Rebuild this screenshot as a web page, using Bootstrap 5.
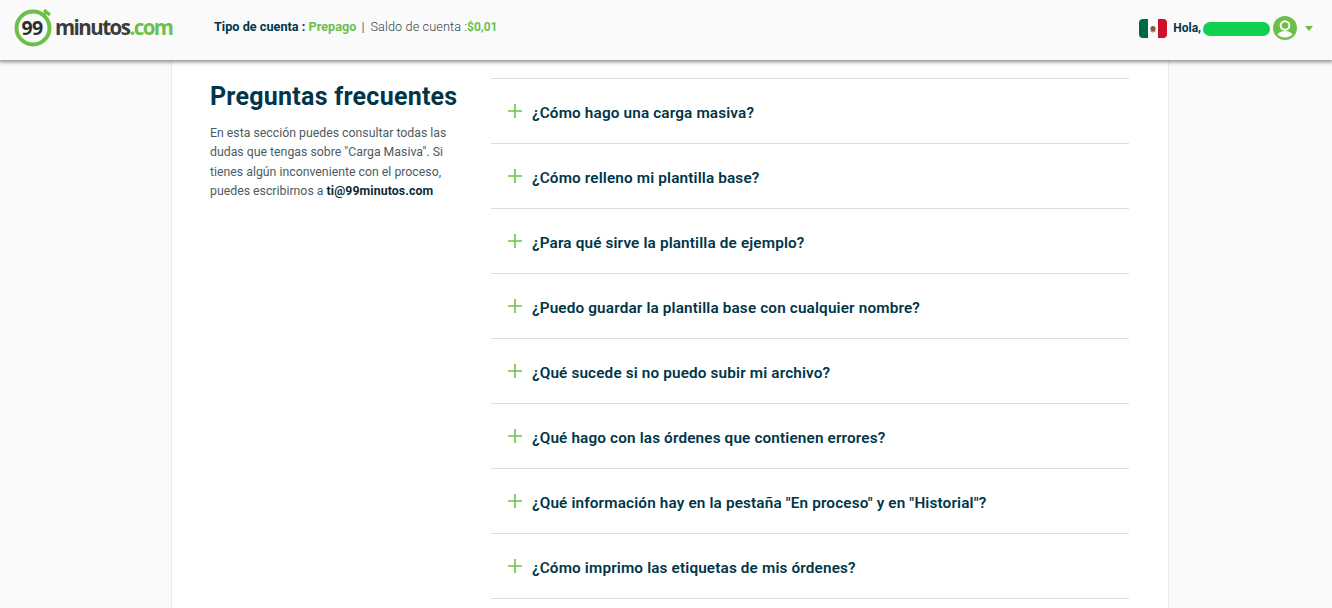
<!DOCTYPE html>
<html lang="es">
<head>
<meta charset="utf-8">
<title>Preguntas frecuentes</title>
<link href="https://cdn.jsdelivr.net/npm/bootstrap@5.3.0/dist/css/bootstrap.min.css" rel="stylesheet">
<style>
html,body{height:100%;overflow:hidden}
body{background:#fafafa;font-family:Roboto,"Liberation Sans",sans-serif;color:#00364a}
.topbar{height:60px;background:#fafafa;box-shadow:0 1px 4px 1px rgba(0,0,0,.45);padding:0 19px 4px 14px;position:relative;z-index:2}
.logo-box{width:162px;height:36px;flex:none}
.logo-svg{display:block;margin-top:-1px}
.logo-word{font-family:"Open Sans",sans-serif;font-weight:700;font-size:20.5px;fill:#3b3b3b}
.logo-com{fill:#6cc04a}
.logo-nines{font-family:"Open Sans",sans-serif;font-weight:700;font-size:19.5px;letter-spacing:-.6px;fill:#2d2d2d}
.acct{margin-left:38px;font-size:12.7px;color:#4c5b62;margin-top:-2px}
.acct b{font-weight:700}
.tone-dark{color:#00364a}
.tone-green{color:#6cc04a}
.acct .tone-narrow{font-size:12px}
.sep{margin:0 6px 0 5px;color:#666}
.saldo{font-weight:300;letter-spacing:.1px;color:#36464d}
.greet{font-size:12px;font-weight:700;color:#00364a;margin-left:6px;margin-top:-1px}
.mask-name{display:block;width:67px;height:14px;border-radius:7px;background:#12d04f;margin-left:2px;margin-top:1px}
.avatar-svg{margin-left:3px}
.drop-tri{width:0;height:0;border-left:4.5px solid transparent;border-right:4.5px solid transparent;border-top:5px solid #6cc04a;margin-left:8px}
.sheet{width:998px;margin-left:171px;min-height:548px;background:#fff;border-left:1px solid #ececec;border-right:1px solid #ececec}
.side-col{width:319px;flex:none;padding:23px 32px 0 38px}
.side-title{font-size:25px;font-weight:700;line-height:28px;color:#00364a;margin:0 0 13px;white-space:nowrap;letter-spacing:.25px}
.side-text{font-size:12.3px;line-height:19.4px;color:#4c5b62;margin:0;font-weight:400;letter-spacing:0}
.side-text b{font-weight:700;color:#0d2b38;letter-spacing:.1px}
.faq-col{width:638px;flex:none;padding-top:18px}
.faq-list{border-bottom:1px solid #dedede}
.faq-list>.list-group-item.faq-row{height:65px;border-width:1px 0 0;border-style:solid;border-color:#dedede;border-radius:0;padding:0 0 0 17px;background:transparent;color:#00364a}
.faq-q{font-size:15.3px;font-weight:600;letter-spacing:.15px;margin-left:10px;margin-top:5px}
.faq-plus{flex:none;margin-top:0}
</style>
</head>
<body>
<nav class="navbar topbar d-flex flex-nowrap align-items-center justify-content-start">
  <div class="logo-box">
    <svg class="logo-svg" width="162" height="42" viewBox="0 0 162 42" role="img" aria-label="99minutos.com">
      <circle cx="19" cy="19" r="16.500" fill="none" stroke="#6cc04a" stroke-width="4"/>
      <path d="M29 7l4-4.500M30 1l6 5" stroke="#6cc04a" stroke-width="3.200" fill="none"/>
      <text x="7.500" y="26" class="logo-nines">99</text>
      <text x="41" y="26" class="logo-word" textLength="119" lengthAdjust="spacing">minutos<tspan class="logo-com">.com</tspan></text>
    </svg>
  </div>
  <div class="acct d-flex align-items-center">
    <b class="tone-dark">Tipo de cuenta :&nbsp;</b><b class="tone-green">Prepago</b><span class="sep">|</span><span class="saldo">Saldo de cuenta :</span><b class="tone-green tone-narrow">$0,01</b>
  </div>
  <div class="d-flex align-items-center ms-auto">
    <svg width="28" height="19" viewBox="0 0 28 19" role="img" aria-label="México">
      <path d="M4 0h5v19H4a4 4 0 0 1-4-4V4a4 4 0 0 1 4-4z" fill="#006847"/>
      <rect x="9" width="10" height="19" fill="#fafafa"/>
      <path d="M19 0h5a4 4 0 0 1 4 4v11a4 4 0 0 1-4 4h-5z" fill="#ce1126"/>
      <circle cx="14" cy="9.500" r="2.600" fill="#8a5a3c"/>
      <path d="M11.500 12c1.500 1.200 3.500 1.200 5 0" stroke="#5f8a4d" fill="none"/>
    </svg>
    <span class="greet">Hola,</span>
    <span class="mask-name"></span>
    <svg class="avatar-svg" width="24" height="24" viewBox="0 0 24 24" role="img" aria-label="Usuario">
      <circle cx="12" cy="12" r="12" fill="#6cc04a"/>
      <circle cx="12" cy="9.500" r="4.300" fill="none" stroke="#fafafa" stroke-width="2"/>
      <path d="M4.500 18.500c2-2.600 4.500-3.500 7.500-3.500s5.500.9 7.500 3.500c-2 2-4.500 3-7.500 3s-5.500-1-7.500-3z" fill="#fafafa"/>
    </svg>
    <span class="drop-tri"></span>
  </div>
</nav>
<main class="sheet d-flex">
  <aside class="side-col">
    <h1 class="side-title">Preguntas frecuentes</h1>
    <p class="side-text">En esta sección puedes consultar todas las dudas que tengas sobre "Carga Masiva". Si tienes algún inconveniente con el proceso, puedes escribirnos a <b>ti@99minutos.com</b></p>
  </aside>
  <section class="faq-col">
    <div class="list-group list-group-flush faq-list">
      <div class="list-group-item faq-row d-flex align-items-center"><svg class="faq-plus" width="14" height="14" viewBox="0 0 14 14"><path d="M7 0v14M0 7h14" stroke="#6cc04a" stroke-width="1.600"/></svg><span class="faq-q">¿Cómo hago una carga masiva?</span></div>
      <div class="list-group-item faq-row d-flex align-items-center"><svg class="faq-plus" width="14" height="14" viewBox="0 0 14 14"><path d="M7 0v14M0 7h14" stroke="#6cc04a" stroke-width="1.600"/></svg><span class="faq-q">¿Cómo relleno mi plantilla base?</span></div>
      <div class="list-group-item faq-row d-flex align-items-center"><svg class="faq-plus" width="14" height="14" viewBox="0 0 14 14"><path d="M7 0v14M0 7h14" stroke="#6cc04a" stroke-width="1.600"/></svg><span class="faq-q">¿Para qué sirve la plantilla de ejemplo?</span></div>
      <div class="list-group-item faq-row d-flex align-items-center"><svg class="faq-plus" width="14" height="14" viewBox="0 0 14 14"><path d="M7 0v14M0 7h14" stroke="#6cc04a" stroke-width="1.600"/></svg><span class="faq-q">¿Puedo guardar la plantilla base con cualquier nombre?</span></div>
      <div class="list-group-item faq-row d-flex align-items-center"><svg class="faq-plus" width="14" height="14" viewBox="0 0 14 14"><path d="M7 0v14M0 7h14" stroke="#6cc04a" stroke-width="1.600"/></svg><span class="faq-q">¿Qué sucede si no puedo subir mi archivo?</span></div>
      <div class="list-group-item faq-row d-flex align-items-center"><svg class="faq-plus" width="14" height="14" viewBox="0 0 14 14"><path d="M7 0v14M0 7h14" stroke="#6cc04a" stroke-width="1.600"/></svg><span class="faq-q">¿Qué hago con las órdenes que contienen errores?</span></div>
      <div class="list-group-item faq-row d-flex align-items-center"><svg class="faq-plus" width="14" height="14" viewBox="0 0 14 14"><path d="M7 0v14M0 7h14" stroke="#6cc04a" stroke-width="1.600"/></svg><span class="faq-q">¿Qué información hay en la pestaña "En proceso" y en "Historial"?</span></div>
      <div class="list-group-item faq-row d-flex align-items-center"><svg class="faq-plus" width="14" height="14" viewBox="0 0 14 14"><path d="M7 0v14M0 7h14" stroke="#6cc04a" stroke-width="1.600"/></svg><span class="faq-q">¿Cómo imprimo las etiquetas de mis órdenes?</span></div>
    </div>
  </section>
</main>
<script src="https://cdn.jsdelivr.net/npm/bootstrap@5.3.0/dist/js/bootstrap.bundle.min.js"></script>
</body>
</html>
